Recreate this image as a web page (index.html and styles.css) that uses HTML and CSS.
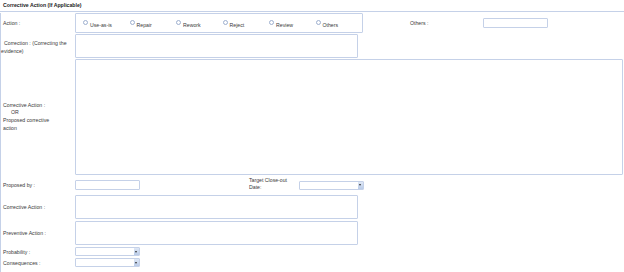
FILE: index.html
```html
<!DOCTYPE html>
<html lang="en">
<head>
    <meta charset="UTF-8">
    <title>Corrective Action</title>
    <link rel="stylesheet" href="styles.css">
</head>
<body>
    <div class="section-title">Corrective Action (If Applicable)</div>
    <div class="form">
        <div class="row row-action">
            <div class="label">Action :</div>
            <div class="radio-box">
                <label class="radio"><input type="radio" name="action"><span>Use-as-is</span></label>
                <label class="radio"><input type="radio" name="action"><span>Repair</span></label>
                <label class="radio"><input type="radio" name="action"><span>Rework</span></label>
                <label class="radio"><input type="radio" name="action"><span>Reject</span></label>
                <label class="radio"><input type="radio" name="action"><span>Review</span></label>
                <label class="radio"><input type="radio" name="action"><span>Others</span></label>
            </div>
            <div class="label others-label">Others :</div>
            <input type="text" class="field small others-field">
        </div>

        <div class="row row-correction">
            <div class="label label-wrap">Correction : (Correcting the evidence)</div>
            <textarea class="field medium h-correction"></textarea>
        </div>

        <div class="row row-big">
            <div class="label label-stack">
                Corrective Action :<br>
                <span class="or">OR</span><br>
                Proposed corrective<br>
                action
            </div>
            <textarea class="field wide"></textarea>
        </div>

        <div class="row row-proposed">
            <div class="label">Proposed by :</div>
            <input type="text" class="field small">
            <div class="label target-label">Target Close-out<br>Date:</div>
            <div class="select-wrap target-select">
                <select class="select"></select>
                <span class="arrow"></span>
            </div>
        </div>

        <div class="row row-text">
            <div class="label">Corrective Action :</div>
            <textarea class="field medium"></textarea>
        </div>

        <div class="row row-text">
            <div class="label">Preventive Action :</div>
            <textarea class="field medium"></textarea>
        </div>

        <div class="row row-select">
            <div class="label">Probability :</div>
            <div class="select-wrap">
                <select class="select"></select>
                <span class="arrow"></span>
            </div>
        </div>

        <div class="row row-select">
            <div class="label">Consequences :</div>
            <div class="select-wrap">
                <select class="select"></select>
                <span class="arrow"></span>
            </div>
        </div>
    </div>
</body>
</html>
```

FILE: styles.css
```css
* {
    margin: 0;
    padding: 0;
    box-sizing: border-box;
}

body {
    font-family: "Liberation Sans", Arial, sans-serif;
    font-size: 5.2px;
    color: #3a3a3a;
    background: #fff;
}

.section-title {
    height: 12px;
    line-height: 11px;
    padding-left: 3px;
    font-weight: bold;
    color: #222;
    border-bottom: 1px solid #c5d1e8;
}

.form {
    border-left: 1px solid #c5d1e8;
    height: 260px;
}

.row {
    display: flex;
    align-items: center;
}

.label {
    width: 74px;
    flex-shrink: 0;
    padding-left: 2px;
    line-height: 8px;
}

.field {
    display: block;
    border: 1px solid #c5d1e8;
    border-radius: 1px;
    background: #fff;
    font: inherit;
    resize: none;
    outline: none;
}

.field.small {
    width: 65px;
    height: 10px;
}

.field.medium {
    width: 283px;
    height: 24px;
}

.field.wide {
    width: 548px;
    height: 116px;
}

/* action row */
.row-action {
    margin-top: 1px;
}

.radio-box {
    display: flex;
    width: 288px;
    height: 20px;
    padding-left: 7px;
    border: 1px solid #c5d1e8;
    border-radius: 1px;
}

.radio {
    display: flex;
    align-items: center;
    width: 46.5px;
    padding-top: 1px;
}

.radio input {
    appearance: none;
    width: 5px;
    height: 5px;
    margin: -3px 2px 0 0;
    border: 1px solid #9eb0cf;
    border-radius: 50%;
    background: #fff;
}

.radio span {
    margin-top: 2px;
}

.others-label {
    width: 75px;
    margin-left: 45px;
}

.others-field {
    align-self: flex-start;
    margin-top: 5px;
}

/* correction */
.row-correction {
    margin-top: 1px;
}

.h-correction {
    height: 25px;
}

.label-wrap {
    padding-left: 0;
    text-indent: 3px;
    margin-top: 2px;
}

/* big textarea */
.row-big {
    margin-top: 1px;
}

.label-stack {
    line-height: 7.7px;
}

.or {
    padding-left: 8px;
}

/* proposed by */
.row-proposed {
    margin-top: 3px;
    height: 14px;
}

.target-label {
    width: 50px;
    margin-left: 109px;
    padding-left: 0;
    line-height: 7.5px;
    margin-top: -2px;
}

.target-select {
    width: 65px;
    height: 10px;
}

/* textboxes */
.row-text {
    margin-top: 3px;
}

.row-text + .row-text {
    margin-top: 2px;
}

/* selects */
.row-select {
    margin-top: 2px;
}

.select-wrap {
    position: relative;
    width: 65px;
    height: 9px;
}

.select {
    appearance: none;
    display: block;
    width: 100%;
    height: 100%;
    border: 1px solid #c5d1e8;
    border-radius: 1px;
    background: #fff;
    font: inherit;
    outline: none;
}

.arrow {
    position: absolute;
    top: 1px;
    right: 1px;
    bottom: 1px;
    width: 5px;
    background: linear-gradient(#dfe8f6, #b9cbe8);
}

.arrow::after {
    content: "";
    position: absolute;
    left: 1px;
    top: 50%;
    margin-top: -1px;
    border-left: 1.5px solid transparent;
    border-right: 1.5px solid transparent;
    border-top: 2px solid #333;
}
```
